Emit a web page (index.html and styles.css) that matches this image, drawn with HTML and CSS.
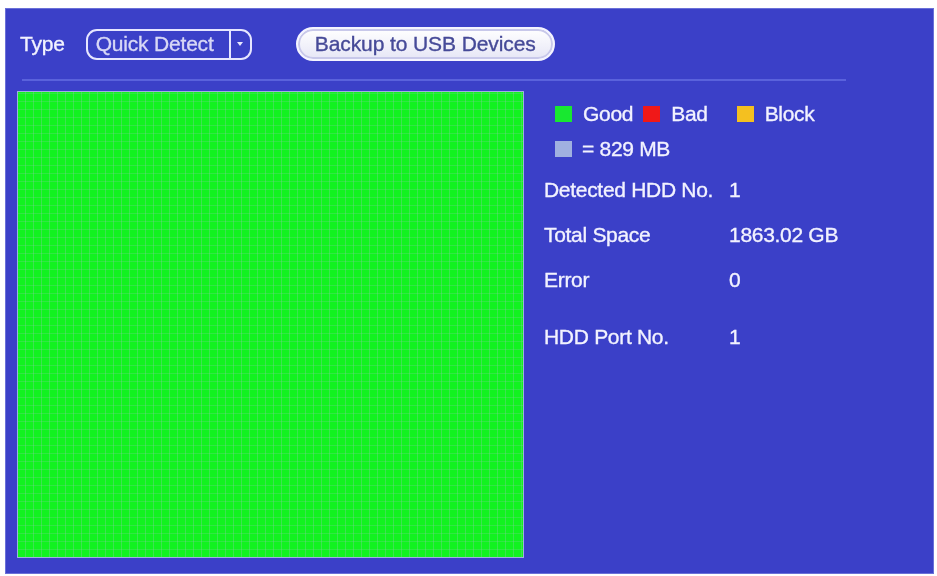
FILE: index.html
```html
<!DOCTYPE html>
<html lang="en">
  <head>
    <meta charset="UTF-8" />
    <title>HDD Detect</title>
    <link rel="stylesheet" href="styles.css">
  </head>
  <body>
    <div class="panel">
      <div class="toolbar">
        <span class="label">Type</span>
        <div class="select">
          <span class="select-text">Quick Detect</span>
          <span class="select-arrow">
            <svg width="10" height="8" viewBox="0 0 10 8"><path d="M2 2 L5 6 L8 2 Z" fill="#e8e8ff"/></svg>
          </span>
        </div>
        <button class="btn">Backup to USB Devices</button>
      </div>
      <div class="divider"></div>

      <div class="content">
        <div class="disk-map"></div>

        <div class="info">
          <div class="legend">
            <span class="swatch good"></span><span class="key">Good</span>
            <span class="swatch bad"></span><span class="key">Bad</span>
            <span class="swatch block"></span><span class="key">Block</span>
          </div>
          <div class="legend unit">
            <span class="swatch cell"></span><span class="key">= 829 MB</span>
          </div>

          <div class="row first"><span class="name">Detected HDD No.</span><span class="val">1</span></div>
          <div class="row"><span class="name">Total Space</span><span class="val">1863.02 GB</span></div>
          <div class="row"><span class="name">Error</span><span class="val">0</span></div>
          <div class="row port"><span class="name">HDD Port No.</span><span class="val">1</span></div>
        </div>
      </div>
    </div>
  </body>
</html>
```

FILE: styles.css
```css
* {
  box-sizing: border-box;
}

html,
body {
  margin: 0;
  padding: 0;
  background: #ffffff;
  width: 937px;
  height: 576px;
  overflow: hidden;
}

body {
  font-family: "Liberation Sans", Arial, sans-serif;
  color: #f2f2ff;
  -webkit-text-stroke: 0.35px currentColor;
}

.panel {
  margin: 8px 0 0 5px;
  width: 929px;
  height: 566px;
  background: #3b40c8;
  border: 1px solid #6a70d8;
  filter: blur(0.5px);
}

.toolbar {
  display: flex;
  align-items: center;
  height: 70px;
  padding: 0 0 0 14px;
}

.label {
  font-size: 21px;
  letter-spacing: -0.2px;
  margin-right: 21px;
}

.select {
  display: flex;
  align-items: stretch;
  width: 166px;
  height: 31px;
  border: 2px solid #e6e6ff;
  border-radius: 11px;
  margin-right: 44px;
}

.select-text {
  flex: 1;
  display: flex;
  align-items: center;
  padding-left: 8px;
  font-size: 21px;
  letter-spacing: -0.2px;
  color: #d8d8f6;
}

.select-arrow {
  width: 21px;
  display: flex;
  align-items: center;
  justify-content: center;
  border-left: 2px solid #e6e6ff;
}

.btn {
  width: 259px;
  height: 34px;
  border: 2px solid #f4f4ff;
  border-radius: 17px;
  background: linear-gradient(#ffffff, #e6e6f6);
  box-shadow: inset 0 0 0 2px #c8c8ea;
  color: #464a98;
  -webkit-text-stroke: 0.35px #464a98;
  font-family: "Liberation Sans", Arial, sans-serif;
  font-size: 21px;
  letter-spacing: -0.1px;
  padding: 0;
}

.divider {
  margin-left: 16px;
  width: 824px;
  height: 2px;
  background: #5a62dc;
}

.content {
  display: flex;
  padding: 10px 0 0 11px;
}

.disk-map {
  width: 507px;
  height: 467px;
  background-color: #12f220;
  background-image:
    repeating-linear-gradient(90deg, transparent 0 7px, rgba(140, 200, 170, 0.35) 7px 8px),
    repeating-linear-gradient(0deg, transparent 0 7px, rgba(140, 200, 170, 0.25) 7px 8px);
  border: 1px solid #9fb0e0;
}

.info {
  padding: 11px 0 0 20px;
  font-size: 21px;
  letter-spacing: -0.3px;
}

.legend {
  display: flex;
  align-items: center;
  height: 24px;
  padding-left: 11px;
}

.legend.unit {
  margin-top: 11px;
}

.swatch {
  width: 17px;
  height: 16px;
  margin-right: 11px;
}

.key {
  margin-right: 10px;
}

.swatch.good { background: #18e830; }
.swatch.bad { background: #f01818; }
.swatch.block { background: #f4c020; margin-left: 19px; }
.swatch.cell { background: #a0b0e0; margin-right: 10px; }

.row {
  display: flex;
  align-items: center;
  height: 24px;
  margin-top: 21px;
}

.row.first {
  margin-top: 17px;
}

.row.port {
  margin-top: 33px;
}

.name {
  width: 185px;
}
```
